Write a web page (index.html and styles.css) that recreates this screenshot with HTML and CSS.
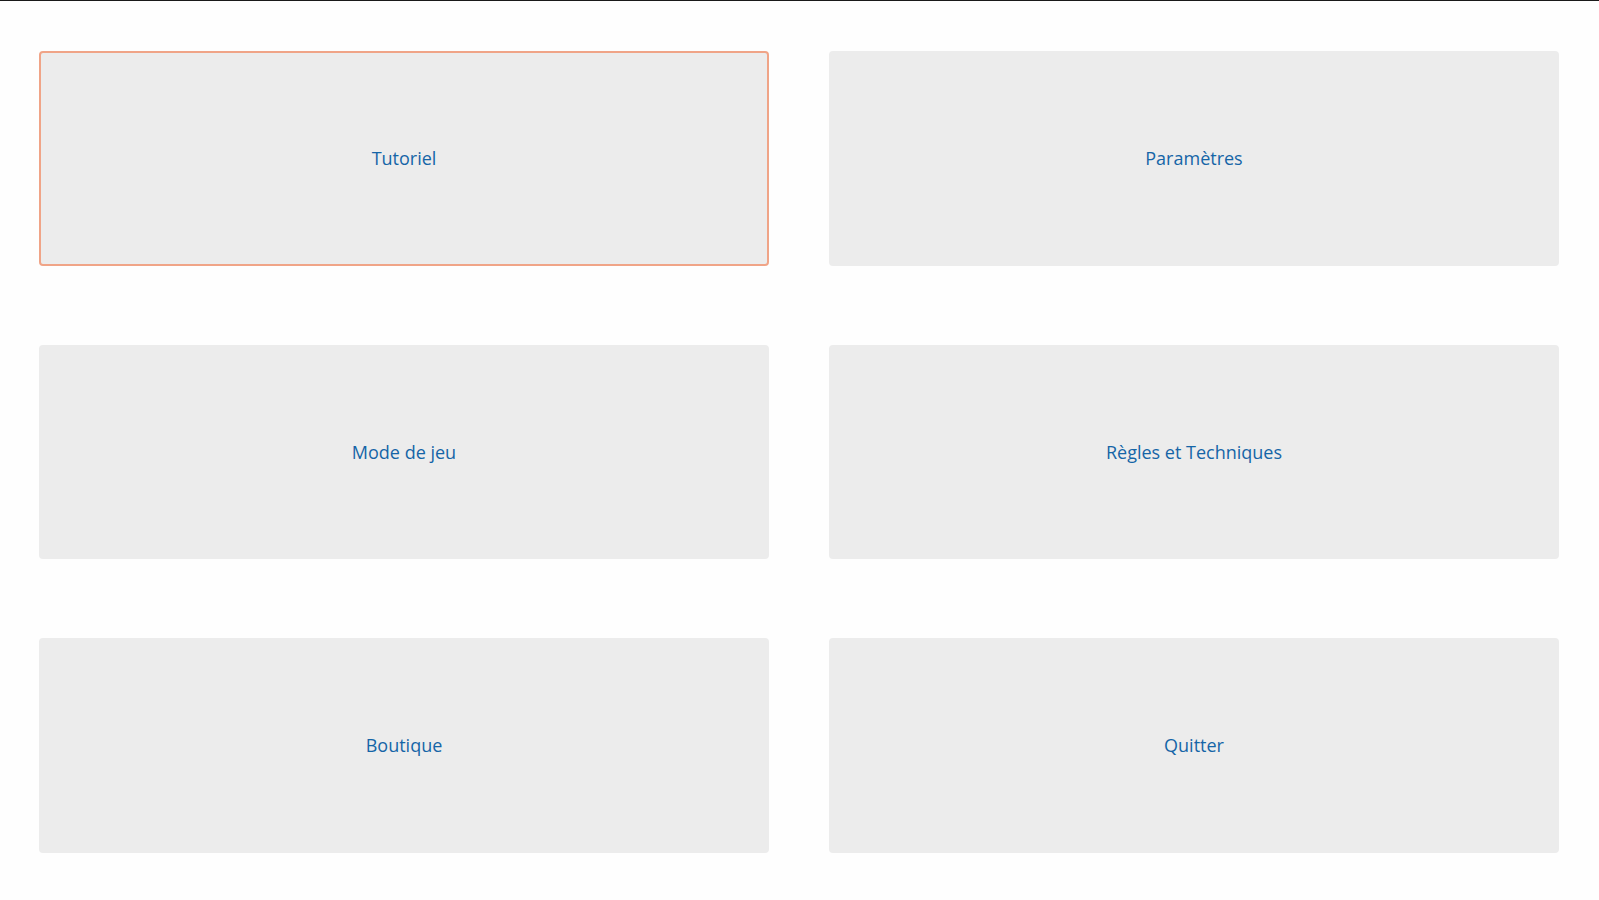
FILE: index.html
```html
<!DOCTYPE html>
<html lang="fr">
<head>
<meta charset="utf-8">
<title>Menu</title>
<link rel="stylesheet" href="styles.css">
</head>
<body>
<div class="topline"></div>
<main class="menu">
  <button class="tile focused">Tutoriel</button>
  <button class="tile">Paramètres</button>
  <button class="tile">Mode de jeu</button>
  <button class="tile">Règles et Techniques</button>
  <button class="tile">Boutique</button>
  <button class="tile">Quitter</button>
</main>
</body>
</html>
```
FILE: styles.css
```css
html, body {
  margin: 0;
  padding: 0;
  background: #fefefe;
  font-family: "Open Sans", "Noto Sans", sans-serif;
}
.topline {
  height: 1px;
  background: #1a1a1a;
}
.menu {
  display: grid;
  grid-template-columns: 730px 730px;
  grid-auto-rows: 214.5px;
  column-gap: 60px;
  row-gap: 79px;
  padding: 50px 40px 0 39px;
}
.tile {
  background: #ececec;
  border: 2px solid #ececec;
  border-radius: 4px;
  color: #1565a7;
  font-family: "Open Sans", "Noto Sans", sans-serif;
  font-size: 18px;
  display: flex;
  align-items: center;
  justify-content: center;
  padding: 0;
  cursor: pointer;
}
.tile.focused {
  border-color: #f0a487;
}
```
